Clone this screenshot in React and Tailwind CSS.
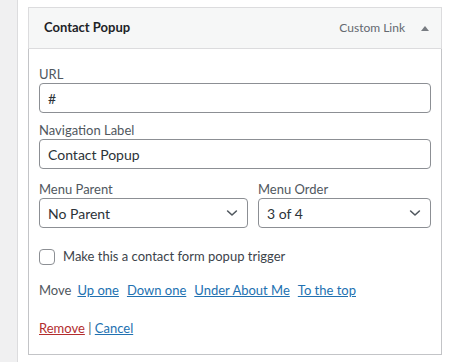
import { useState } from 'react';

const Chevron = () => (
    <svg width="16" height="16" viewBox="0 0 20 20" className="shrink-0">
        <path d="M4.5 7.5l5.5 5 5.5-5" fill="none" stroke="#50575e" strokeWidth="2" strokeLinecap="round" strokeLinejoin="round" />
    </svg>
);

const Field = ({ label, children, className = '' }) => (
    <div className={className}>
        <label className="block text-[13px] leading-[18px] text-[#50575e]">{label}</label>
        {children}
    </div>
);

const SelectBox = ({ value }) => (
    <div className="h-[30px] flex items-center justify-between pl-[8px] pr-[7px] border border-[#8c8f94] rounded-[4px] bg-white text-[14px] text-[#2c3338]">
        <span>{value}</span>
        <Chevron />
    </div>
);

export default function App() {
    const [checked, setChecked] = useState(false);

    return (
        <div className="flex w-[464px] h-[362px] bg-white overflow-hidden" style={{ fontFamily: 'Lato, sans-serif' }}>
            {/* admin sidebar edge */}
            <div className="w-[17px] shrink-0 bg-[#f0f0f1] border-r border-[#dcdcde] box-content" />

            <div className="pl-[10px] pt-[7px]">
                <div className="w-[414px]">
                    {/* item handle */}
                    <div className="h-[42px] flex items-center justify-between pl-[15px] pr-[12px] bg-[#f6f7f7] border border-[#dcdcde]">
                        <span className="text-[13px] font-bold text-[#1d2327]">Contact Popup</span>
                        <div className="flex items-center gap-[16px]">
                            <span className="text-[12px] text-[#646970]">Custom Link</span>
                            <svg width="8" height="5" viewBox="0 0 8 5">
                                <path d="M0 5L4 0L8 5Z" fill="#787c82" />
                            </svg>
                        </div>
                    </div>

                    {/* settings */}
                    <div className="h-[306px] border border-t-0 border-[#c3c4c7] px-[10px] pt-[16px]">
                        <Field label="URL">
                            <div className="h-[30px] flex items-center px-[8px] border border-[#8c8f94] rounded-[4px] text-[14px] text-[#2c3338]">#</div>
                        </Field>

                        <Field label="Navigation Label" className="mt-[8px]">
                            <div className="h-[30px] flex items-center px-[8px] border border-[#8c8f94] rounded-[4px] text-[14px] text-[#2c3338]">Contact Popup</div>
                        </Field>

                        <div className="flex gap-[10px] mt-[11px]">
                            <Field label="Menu Parent" className="w-[209px]">
                                <SelectBox value="No Parent" />
                            </Field>
                            <Field label="Menu Order" className="flex-1">
                                <SelectBox value="3 of 4" />
                            </Field>
                        </div>

                        <label className="flex items-center gap-[8px] mt-[19px] text-[13px] text-[#3c434a] cursor-pointer">
                            <span
                                onClick={() => setChecked(!checked)}
                                className="w-[16px] h-[16px] border border-[#8c8f94] rounded-[4px] bg-white shrink-0"
                            />
                            Make this a contact form popup trigger
                        </label>

                        <div className="flex items-center gap-[8px] mt-[13px] text-[13px] leading-[20px]">
                            <span className="text-[#50575e] -mr-[2px]">Move</span>
                            <a className="text-[#2271b1] underline">Up one</a>
                            <a className="text-[#2271b1] underline">Down one</a>
                            <a className="text-[#2271b1] underline">Under About Me</a>
                            <a className="text-[#2271b1] underline">To the top</a>
                        </div>

                        <div className="mt-[18px] text-[13px] leading-[20px] text-[#50575e]">
                            <a className="text-[#b32d2e] underline">Remove</a>
                            <span> | </span>
                            <a className="text-[#2271b1] underline">Cancel</a>
                        </div>
                    </div>
                </div>
            </div>
        </div>
    );
}
